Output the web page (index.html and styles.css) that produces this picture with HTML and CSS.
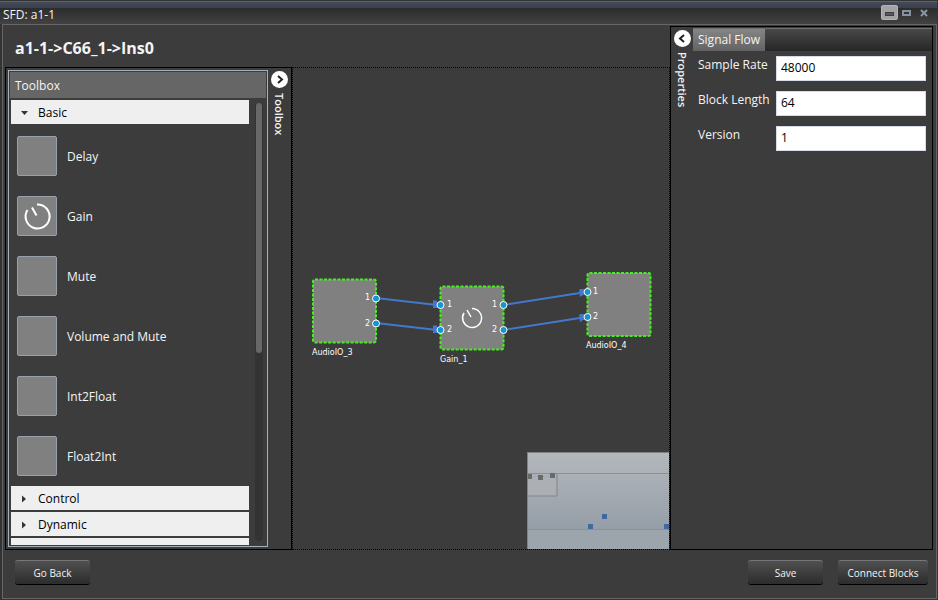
FILE: index.html
```
<!DOCTYPE html>
<html lang="en">
<head>
<meta charset="utf-8">
<title>SFD: a1-1</title>
<link rel="stylesheet" href="styles.css">
</head>
<body>
<div class="window">
  <header class="titlebar">
    <span class="caption">SFD: a1-1</span>
    <div class="window-buttons">
      <button class="win-button win-active" aria-label="Minimize"><svg width="17" height="15"><rect x="4.500" y="7.500" width="8" height="3" fill="#555862" stroke="#3c3e46"/></svg></button>
      <button class="win-button" aria-label="Maximize"><svg width="17" height="15"><rect x="5" y="6" width="7" height="4" fill="none" stroke="#878fa2" stroke-width="2"/></svg></button>
      <button class="win-button" aria-label="Close"><svg width="17" height="15"><path d="M6 5l6 6M12 5l-6 6" stroke="#8c94a8" stroke-width="2"/></svg></button>
    </div>
  </header>
  <div class="frame">
    <main class="workspace">
      <section class="editor">
        <h1 class="path">a1-1-&gt;C66_1-&gt;Ins0</h1>
        <div class="editor-body">
          <aside class="toolbox-dock">
            <div class="toolbox">
              <h2 class="toolbox-title">Toolbox</h2>
              <div class="toolbox-scroll">
                <div class="toolbox-list">
                  <button class="category"><svg class="arrow" width="8" height="8"><path d="M0 2h7L3.500 6z" fill="#333"/></svg>Basic</button>
                  <ul class="blocks">
                    <li class="block"><span class="tile"></span><span class="name">Delay</span></li>
                    <li class="block"><span class="tile"><svg width="38" height="38" fill="none" stroke="#fff" stroke-width="2"><path d="M19 7.500A12 12 0 1 1 9.500 13M14 10.500l4.500 8"/></svg></span><span class="name">Gain</span></li>
                    <li class="block"><span class="tile"></span><span class="name">Mute</span></li>
                    <li class="block"><span class="tile"></span><span class="name">Volume and Mute</span></li>
                    <li class="block"><span class="tile"></span><span class="name">Int2Float</span></li>
                    <li class="block"><span class="tile"></span><span class="name">Float2Int</span></li>
                  </ul>
                  <button class="category"><svg class="arrow" width="8" height="8"><path d="M1 0.500v7L5 4z" fill="#333"/></svg>Control</button>
                  <button class="category"><svg class="arrow" width="8" height="8"><path d="M1 0.500v7L5 4z" fill="#333"/></svg>Dynamic</button>
                  <div class="category"></div>
                </div>
                <div class="track"><div class="thumb"></div></div>
              </div>
            </div>
            <div class="dock-tab">
              <button class="toggle" aria-label="Collapse toolbox"><svg width="17" height="17" fill="none" stroke="#222" stroke-width="2"><path d="M7 5l4 3.500L7 12"/></svg></button>
              <span class="dock-label">Toolbox</span>
            </div>
          </aside>
          <div class="canvas">
            <svg class="graph" width="376" height="320">
              <g fill="#808080" stroke="#46f01e" stroke-width="2" stroke-dasharray="3 1.500">
                <rect x="20" y="211.500" width="63" height="63" rx="2"/>
                <rect x="147.500" y="218.500" width="63" height="63" rx="2"/>
                <rect x="294.500" y="205" width="63" height="63" rx="2"/>
              </g>
              <g stroke="#4478cc" stroke-width="1.800">
                <path d="M83 230L144 237M83 255L144 262M210 237L290 224.500M210 262L290 249.500"/>
              </g>
              <g fill="#4478cc">
                <path d="M140 232.500l8 4-8 4zM140 257.500l8 4-8 4zM286 221.500l9 2-8 5.500zM286 246.500l9 2-8 5.500z"/>
                <path d="M140 232.500h4v7.500h-4zM140 257.500h4v7.500h-4zM287 221h4v6h-4zM287 246h4v6h-4z"/>
              </g>
              <path d="M179 240.500a9.500 9.500 0 1 1 -8 4.500M174 242l4 7" fill="none" stroke="#fff" stroke-width="1.500"/>
              <g fill="#1794d2" stroke="#fff">
                <circle cx="83" cy="230.500" r="3.500"/><circle cx="83" cy="255.500" r="3.500"/>
                <circle cx="147.500" cy="237" r="3.500"/><circle cx="147.500" cy="262" r="3.500"/>
                <circle cx="210.500" cy="237" r="3.500"/><circle cx="210.500" cy="262" r="3.500"/>
                <circle cx="294.500" cy="224" r="3.500"/><circle cx="294.500" cy="249" r="3.500"/>
              </g>
              <g class="graph-text">
                <text x="72" y="232">1</text><text x="72" y="258">2</text>
                <text x="154" y="239">1</text><text x="154" y="264">2</text>
                <text x="199" y="239">1</text><text x="199" y="264">2</text>
                <text x="300" y="226">1</text><text x="300" y="251">2</text>
                <text x="19" y="287">AudioIO_3</text>
                <text x="147" y="294">Gain_1</text>
                <text x="293" y="280">AudioIO_4</text>
              </g>
            </svg>
            <svg class="minimap" width="142" height="97">
              <defs><linearGradient id="haze" x2="0" y2="1"><stop offset="0" stop-color="#b4b8bd"/><stop offset=".8" stop-color="#959ea7"/><stop offset="1" stop-color="#9da5ad"/></linearGradient></defs>
              <rect width="142" height="97" fill="url(#haze)"/>
              <rect y="77" width="142" height="20" fill="#9da5ac"/>
              <path d="M0 .5h142M.5 0v97" stroke="#7f8388"/>
              <path d="M1 21.500h141M1 77.500h141" stroke="#8b9198"/>
              <rect x="1" y="22" width="29" height="22" fill="#acb0b4"/>
              <path d="M30 22v22H1" fill="none" stroke="#80858b"/>
              <path d="M1 24.500h26" stroke="#a0a5ba"/>
              <path d="M1 22h4v5H1zM11 23h5v5h-5zM23 21h5v5h-5z" fill="#696b69"/>
              <path d="M75 62h5v5h-5zM61 72h5v5h-5zM137 72h5v5h-5z" fill="#4069a0"/>
            </svg>
          </div>
        </div>
      </section>
      <aside class="properties">
        <div class="dock-tab">
          <button class="toggle" aria-label="Collapse properties"><svg width="17" height="17" fill="none" stroke="#222" stroke-width="2"><path d="M10 5L6 8.500L10 12"/></svg></button>
          <span class="dock-label">Properties</span>
        </div>
        <div class="property-pane">
          <div class="tabs"><button class="tab">Signal Flow</button></div>
          <form class="fields">
            <label for="rate">Sample Rate</label><input id="rate" value="48000">
            <label for="length">Block Length</label><input id="length" value="64">
            <label for="version">Version</label><input id="version" value="1">
          </form>
        </div>
      </aside>
    </main>
    <footer class="actions">
      <button class="action">Go Back</button>
      <button class="action save">Save</button>
      <button class="action wide">Connect Blocks</button>
    </footer>
  </div>
</div>
</body>
</html>
```
FILE: styles.css
```
* { box-sizing: border-box; }
body {
  margin: 0;
  background: #333;
  color: #f4f4f4;
  font: 12px/16px "Open Sans", "Noto Sans", sans-serif;
}
button, input { font: inherit; color: inherit; }
button { margin: 0; padding: 0; border: 0; background: none; }
h1, h2, ul { margin: 0; padding: 0; font-weight: normal; }
svg { display: block; }

.window {
  display: flex;
  flex-direction: column;
  height: 100vh;
  min-height: 400px;
  padding: 1px 1px 1px 0;
}
.titlebar {
  display: flex;
  flex: none;
  justify-content: space-between;
  height: 23px;
  padding: 0 5px 0 3px;
  border-top: 1px solid #625f68;
  background: linear-gradient(#454a59 0, #3b404f 6px, #2c2c2c 6px, #424242 100%);
}
.caption { padding-top: 5px; }
.window-buttons { display: flex; padding-top: 3px; }
.win-button { width: 17px; height: 15px; }
.win-active { border-radius: 3px; background: #a3a3a3; box-shadow: inset 0 0 0 1px #b4b4b4; }

.frame {
  display: flex;
  flex: 1;
  flex-direction: column;
  min-height: 0;
  margin: 0 0 0 2px;
  padding: 1px 3px 0 2px;
  border: 1px solid #666;
  background: #3c3c3c;
}
.workspace { display: flex; flex: 1; min-height: 0; }
.editor { display: flex; flex: 1; flex-direction: column; min-width: 0; }
.path {
  flex: none;
  height: 41px;
  padding: 12px 10px 9px;
  font-size: 16px;
  font-weight: bold;
  line-height: 20px;
}
.editor-body { display: flex; flex: 1; min-height: 0; }
.toolbox-dock {
  display: flex;
  flex: none;
  width: 287px;
  padding: 2px 1px 2px 2px;
  border: 1px solid #000;
}
.toolbox {
  display: flex;
  flex: 1;
  flex-direction: column;
  padding: 1px;
  border: 1px solid #a4b1bd;
}
.toolbox-title {
  flex: none;
  height: 26px;
  padding: 6px 5px;
  background: #666;
  font-size: 12px;
}
.toolbox-scroll {
  display: flex;
  flex: 1;
  gap: 6px;
  min-height: 0;
  padding: 2px 3px 0 1px;
  overflow: hidden;
}
.toolbox-list { flex: 1; min-height: 0; }
.category {
  display: flex;
  align-items: center;
  gap: 9px;
  width: 100%;
  height: 24px;
  margin-bottom: 2px;
  padding: 2px 0 0 10px;
  background: #efefef;
  color: #000;
  font-weight: 500;
}
.blocks { list-style: none; }
.block {
  display: flex;
  align-items: center;
  gap: 10px;
  height: 60px;
  padding-left: 6px;
}
.name { padding-top: 2px; }
.tile {
  width: 40px;
  height: 40px;
  border: 1px solid #97a0ac;
  border-radius: 2px;
  background: #808080;
}
.track {
  width: 8px;
  margin: 3px 0 4px;
  padding: 0 1px;
  border-radius: 4px;
  background: #333;
}
.thumb { height: 57%; border-radius: 3px; background: #686868; }

.dock-tab {
  display: flex;
  flex: none;
  flex-direction: column;
  align-items: center;
  width: 22px;
  padding-top: 1px;
}
.toggle { width: 17px; height: 17px; border-radius: 50%; background: #fff; }
.dock-label { padding-top: 5px; writing-mode: vertical-rl; font-size: 11px; font-weight: 600; }

.canvas {
  position: relative;
  flex: 1;
  min-width: 0;
  overflow: hidden;
  border: 1px dotted #000;
}
.graph-text { fill: #fff; font: 8px "DejaVu Sans", sans-serif; }
.minimap { position: absolute; right: 0; bottom: 0; }

.properties {
  display: flex;
  flex: none;
  width: 263px;
  border: 1px solid #000;
}
.properties .dock-tab { padding-top: 3px; }
.property-pane { flex: 1; padding-top: 1px; }
.tabs {
  height: 23px;
  border-top: 1px solid #707070;
  background: linear-gradient(#484848, #262626);
}
.tab {
  height: 22px;
  padding: 0 5px;
  background: linear-gradient(#858585, #636363);
}
.fields {
  display: grid;
  grid-template-columns: 78px 1fr;
  gap: 10px 0;
  padding: 5px 6px 0 5px;
}
.fields label { padding-top: 1px; white-space: nowrap; }
.fields input {
  width: 100%;
  height: 25px;
  padding: 0 4px 2px;
  border: 1px solid #d6dbe8;
  background: #fff;
  color: #000;
}

.actions {
  display: flex;
  flex: none;
  gap: 15px;
  height: 48px;
  padding: 10px 5px 13px 10px;
}
.action {
  width: 75px;
  height: 25px;
  border-top: 1px solid #777;
  border-bottom: 1px solid #000;
  border-radius: 3px;
  background: linear-gradient(#505050, #2c2c2c);
  font-size: 10px;
}
.save { margin-left: auto; }
.wide { width: 90px; }
```
